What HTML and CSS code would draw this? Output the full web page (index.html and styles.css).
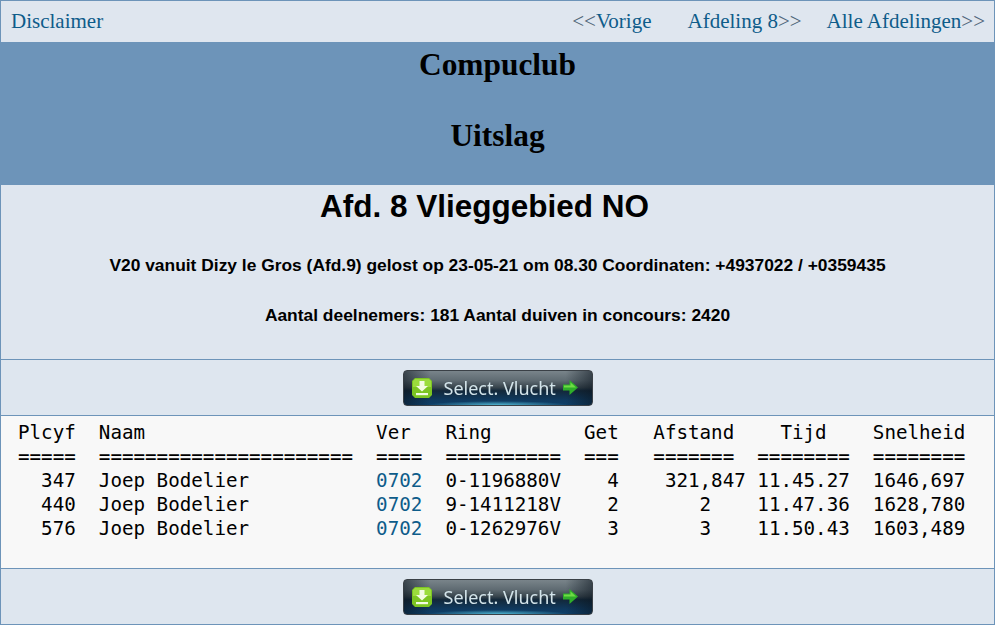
FILE: index.html
```html
<!DOCTYPE html>
<html lang="nl">
<head>
<meta charset="utf-8">
<title>Compuclub Uitslag</title>
<link rel="stylesheet" href="styles.css">
</head>
<body>
<svg class="defs" width="0" height="0" aria-hidden="true">
  <symbol id="ico-down" viewBox="0 0 20 20">
    <path d="M3 0h14l3 3v14l-3 3H3l-3-3V3z" fill="#7cc522"/>
    <path d="M3 1h14l2 2v6H1V3z" fill="#9bdc3c"/>
    <path d="M7.500 3h5v5h3.500L10 13.500 4 8h3.500z" fill="#f2fbe2"/>
    <rect x="4" y="15" width="12" height="2.200" fill="#f2fbe2"/>
  </symbol>
  <symbol id="ico-arrow" viewBox="0 0 15 15">
    <path d="M0 4.500h6.500V0L15 7.500 6.500 15v-4.500H0z" fill="#2fae2a"/>
    <path d="M1 5.500h6.500V2.500L13 7.500H1z" fill="#6fdc45"/>
  </symbol>
</svg>
<div class="page">
  <nav class="topnav">
    <a class="navlink" href="#">Disclaimer</a>
    <div class="navright">
      <a class="navlink" href="#"><span class="chev">&lt;&lt;</span>Vorige</a>
      <a class="navlink" href="#">Afdeling 8<span class="chev">&gt;&gt;</span></a>
      <a class="navlink" href="#">Alle Afdelingen<span class="chev">&gt;&gt;</span></a>
    </div>
  </nav>
  <header class="banner">
    <h1 class="banner-title">Compuclub</h1>
    <h1 class="banner-title">Uitslag</h1>
  </header>
  <section class="info">
    <h2 class="info-title">Afd. 8 Vlieggebied NO</h2>
    <p class="info-line">V20 vanuit Dizy le Gros (Afd.9) gelost op 23-05-21 om 08.30 Coordinaten: +4937022 / +0359435</p>
    <p class="info-line">Aantal deelnemers: 181 Aantal duiven in concours: 2420</p>
  </section>
  <div class="btnbar">
    <a class="btn" href="#"><svg class="btn-ico"><use href="#ico-down"/></svg><span class="btn-text">Select. Vlucht</span><svg class="btn-arrow"><use href="#ico-arrow"/></svg></a>
  </div>
  <section class="results">
<pre class="table">Plcyf  Naam                    Ver   Ring        Get   Afstand    Tijd    Snelheid
=====  ======================  ====  ==========  ===   =======  ========  ========
  347  Joep Bodelier           <a class="ver" href="#">0702</a>  0-1196880V    4    321,847 11.45.27  1646,697
  440  Joep Bodelier           <a class="ver" href="#">0702</a>  9-1411218V    2       2    11.47.36  1628,780
  576  Joep Bodelier           <a class="ver" href="#">0702</a>  0-1262976V    3       3    11.50.43  1603,489</pre>
  </section>
  <div class="btnbar btnbar-last">
    <a class="btn" href="#"><svg class="btn-ico"><use href="#ico-down"/></svg><span class="btn-text">Select. Vlucht</span><svg class="btn-arrow"><use href="#ico-arrow"/></svg></a>
  </div>
</div>
</body>
</html>
```
FILE: styles.css
```css
* { box-sizing: border-box; }
html, body { margin: 0; padding: 0; background: #dee6ef; }
.defs { position: absolute; }
.page {
  width: 995px;
  height: 625px;
  border: 1px solid #6d94b9;
  overflow: hidden;
  display: flex;
  flex-direction: column;
}
.topnav {
  height: 41px;
  flex: none;
  display: flex;
  justify-content: space-between;
  align-items: center;
  padding: 0 9px 1px 10px;
  background: #dfe6ef;
  font-family: "Liberation Serif", serif;
  font-size: 21px;
}
.navright { display: flex; gap: 25px; }
.navright .navlink:first-child { margin-right: 11px; }
.navlink { color: #0e5c8a; text-decoration: none; }
.chev { color: #4d6478; }
.banner {
  height: 143px;
  flex: none;
  background: #6d94b9;
  display: flex;
  flex-direction: column;
  align-items: center;
  padding-top: 5px;
  gap: 35px;
}
.banner-title {
  margin: 0;
  font-family: "Liberation Serif", serif;
  font-size: 31.400px;
  line-height: 36px;
  font-weight: bold;
  color: #000;
}
.info {
  height: 175px;
  flex: none;
  background: #dfe6ef;
  border-bottom: 1px solid #6d94b9;
  text-align: center;
  font-family: "Liberation Sans", sans-serif;
  color: #000;
  padding-top: 3px;
}
.info-title {
  margin: 0 0 31px;
  padding-right: 26px;
  font-size: 31.500px;
  line-height: 37px;
  font-weight: bold;
}
.info-line {
  margin: 0 0 31px;
  font-size: 17.400px;
  line-height: 19px;
  font-weight: bold;
}
.btnbar {
  height: 56px;
  flex: none;
  background: #dee6ef;
  display: flex;
  justify-content: center;
  align-items: center;
  border-bottom: 1px solid #6d94b9;
}
.btnbar-last { border-bottom: 0; flex: 1; }
.btn {
  width: 190px;
  height: 36px;
  display: flex;
  align-items: center;
  border: 1px solid #3a4046;
  border-radius: 4px;
  padding: 0 8px;
  text-decoration: none;
  background:
    radial-gradient(ellipse 70px 4px at 50% 100%, #4fb4d0 0, rgba(79, 180, 208, 0) 100%),
    linear-gradient(90deg, rgba(10, 20, 30, 0.55) 0, rgba(10, 20, 30, 0) 14%, rgba(10, 20, 30, 0) 86%, rgba(10, 20, 30, 0.55) 100%),
    linear-gradient(#79848a 0, #5f6b72 28%, #38454d 48%, #13283a 58%, #0f3a60 86%, #0e3f68 100%);
}
.btn-ico { width: 20px; height: 20px; flex: none; }
.btn-text {
  margin-left: 12px;
  font-family: "Noto Sans", sans-serif;
  font-size: 18px;
  font-weight: 400;
  line-height: 20px;
  color: #d3e4ea;
  white-space: nowrap;
  filter: blur(0.4px);
}
.btn-arrow { width: 15px; height: 15px; margin-left: 7px; flex: none; }
.results {
  height: 153px;
  flex: none;
  background: #f8f8f8;
  border-bottom: 1px solid #6d94b9;
  padding: 5px 0 0 17px;
}
.table {
  margin: 0;
  font-family: "DejaVu Sans Mono", monospace;
  font-size: 19.200px;
  line-height: 24px;
  color: #000;
}
.ver { color: #0e5c8a; text-decoration: none; }
```
